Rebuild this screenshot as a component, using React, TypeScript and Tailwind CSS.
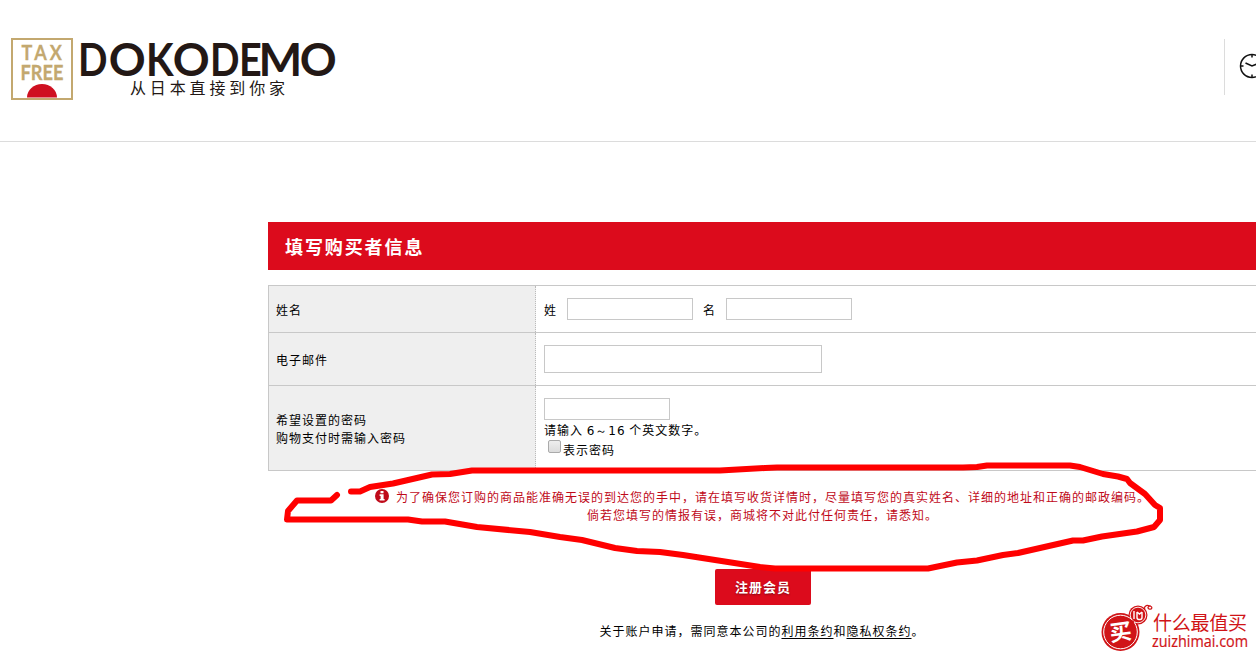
import React from 'react';

const WORDMARK = [
  { char: 'D', x: 81, width: 26 },
  { char: 'O', x: 110, width: 35 },
  { char: 'K', x: 149, width: 25 },
  { char: 'O', x: 174, width: 35 },
  { char: 'D', x: 213, width: 26 },
  { char: 'E', x: 242, width: 18 },
  { char: 'M', x: 262, width: 37 },
  { char: 'O', x: 301, width: 35 }
];

// Ink box of each Lato Bold capital, in em
const INK: Record<string, { left: number; width: number }> = {
  D: { left: 0.075, width: 0.67 },
  O: { left: 0.03, width: 0.765 },
  K: { left: 0.075, width: 0.62 },
  E: { left: 0.075, width: 0.455 },
  M: { left: 0.075, width: 0.8 }
};

const Logo = () =>
<svg width="340" height="84" viewBox="0 20 340 84" role="img" className="tracking-normal">
    <rect x="12" y="39" width="60" height="60" fill="#fff" stroke="#c3a86f" strokeWidth="2" />
    <path d="M27 97.500A15 13.500 0 0 1 57 97.500Z" fill="#cf1020" />
    <g fontFamily="Lato, sans-serif" fontWeight="700" fontSize="20.500" fill="#c3a86f" stroke="#c3a86f" strokeWidth="0.300">
      <text transform="translate(21.500 60) scale(0.880 1)" textLength="46" lengthAdjust="spacing">TAX</text>
      <text x="20.500" y="80" textLength="43" lengthAdjust="spacingAndGlyphs">FREE</text>
    </g>
    <g fontFamily="Lato, sans-serif" fontWeight="700" fontSize="46" fill="#231815">
      {WORDMARK.map((letter) => {
      const ink = INK[letter.char];
      const scale = letter.width / (ink.width * 46);
      return (
        <text
          key={letter.x}
          transform={`translate(${letter.x - ink.left * 46 * scale} 75.500) scale(${scale} 1)`}>
            {letter.char}
          </text>);

    })}
    </g>
    <text
    x="130"
    y="93.500"
    textLength="155"
    fontFamily="'Noto Sans CJK SC', sans-serif"
    fontSize="16"
    fill="#231815">
      从日本直接到你家
    </text>
  </svg>;


const ClockIcon = () =>
<svg width="26" height="26" viewBox="0 0 26 26" fill="none" stroke="#111" strokeWidth="1.500">
    <circle cx="13" cy="13" r="11.500" />
    <path d="M6.500 10L13 13L18 11M13 2v2.500M13 21.500V24M2 13h2.500M21.500 13H24" />
  </svg>;


const InfoIcon = () =>
<svg width="14" height="14" viewBox="0 0 14 14" className="mr-[7px] inline-block align-[-1px]">
    <circle cx="7" cy="7" r="7" fill="#bf0a1a" />
    <path d="M5.500 2h3v2.200h-3zM4.600 5.300h4v4.600h1v1.600H4.600V9.900h1V6.900h-1z" fill="#fff" />
  </svg>;


const MarkerStroke = () =>
<svg
  width="1256"
  height="656"
  viewBox="0 0 1256 656"
  fill="none"
  stroke="#ff0000"
  strokeWidth="6"
  strokeLinecap="round"
  strokeLinejoin="round"
  className="pointer-events-none absolute top-0 left-0">

    <path d="M337 495L331 500.500H297L288 511L287 519.500H408L422 521.500H445L477 527L530 532L560 537L582 540L615 548L637 551L660 552L683 555L760 567L775 568.500H928L957 562.500L977 560.500L1003 555L1018 553L1073 540.500H1083L1102 536.500L1137 531.500L1154 527L1160 520V508L1155 505L1145 494L1130 483L1127 479L1118 476.500L1103 474L1080 467L1070 465.500H987L977 467L963 467.500H777L765 468L720 470.500H472L450 474L432 474.500L393 483.500L370 487L360 491.500H351" />
  </svg>;


const Watermark = () =>
<svg
  width="158"
  height="56"
  viewBox="1098 600 158 56"
  className="pointer-events-none absolute top-[600px] left-[1098px] tracking-normal"
  fill="#d01417">

    <circle cx="1120.500" cy="632" r="19" />
    <circle cx="1138" cy="615" r="9.500" />
    <circle cx="1120.500" cy="632" r="16.800" fill="none" stroke="#fff" strokeWidth="1" />
    <circle cx="1138" cy="615" r="7.800" fill="none" stroke="#fff" strokeWidth="0.900" />
    <path d="M1127 618l7 3l-1 5l-5-2z" />
    <path d="M1144 609c1-4 3-4 6-3c3 1 2 4-1 3c-2-1-1-3 2-3" fill="none" stroke="#d01417" strokeWidth="1.200" />
    <path d="M1134 611v8M1137 612v5.500q0 2 2 2h1q2 0 2-2v-5.500M1137 612l2.500 2l2.500-2" fill="none" stroke="#fff" strokeWidth="1.400" />
    <text x="1109.500" y="640" fontSize="22" fontWeight="700" fill="#fff" fontFamily="'Noto Sans CJK SC', sans-serif" transform="rotate(-8 1120 632)">
      买
    </text>
    <text x="1153" y="630" fontSize="19" textLength="94" fontFamily="'Noto Sans CJK SC', sans-serif">
      什么最值买
    </text>
    <text x="1152" y="647" fontSize="15.500" textLength="96" lengthAdjust="spacingAndGlyphs" stroke="#d01417" strokeWidth="0.200" fontFamily="'Open Sans', 'Noto Sans', sans-serif">
      zuizhimai.com
    </text>
  </svg>;


const labelCell =
'flex w-[267px] shrink-0 items-center border-r border-dotted border-[#bbb] bg-[#efefef] pl-[7px]';
const field = 'border border-[#c8c8c8] bg-white outline-none';

export default function App() {
  return (
    <div className="relative h-[656px] w-full overflow-hidden bg-white font-['Noto_Sans_CJK_SC',sans-serif] text-[12px] leading-[18px] tracking-[1px] text-black">
      <header className="flex h-[142px] w-[1300px] items-start justify-between border-b border-[#dcdcdc] pt-5">
        <Logo />
        <div className="mt-[19px] flex h-14 w-[76px] items-center border-l border-[#dcdcdc] pb-[2px] pl-[14px]">
          <ClockIcon />
        </div>
      </header>

      <main className="ml-[268px] w-[990px] pt-20">
        <h1 className="flex h-12 items-center bg-[#dc0b1c] pb-px pl-[17px] text-[18px] font-bold tracking-[1.9px] text-white">
          填写购买者信息
        </h1>

        <form>
          <div className="mt-[15px] border border-[#c8c8c8]">
            <div className="flex h-[47px] border-b border-[#c8c8c8]">
              <div className={labelCell}>
                <span className="pt-px">姓名</span>
              </div>
              <div className="flex items-center pl-2">
                <span className="w-[23px] pt-px">姓</span>
                <input className={`${field} h-[22px] w-[126px]`} />
                <span className="ml-[10px] w-[23px] pt-px">名</span>
                <input className={`${field} h-[22px] w-[126px]`} />
              </div>
            </div>

            <div className="flex h-[53px] border-b border-[#c8c8c8]">
              <div className={labelCell}>
                <span className="pt-[2px]">电子邮件</span>
              </div>
              <div className="flex items-center pl-2">
                <input className={`${field} h-7 w-[278px]`} />
              </div>
            </div>

            <div className="flex h-[84px]">
              <div className={labelCell}>
                <p className="pt-[2px]">
                  希望设置的密码
                  <br />
                  购物支付时需输入密码
                </p>
              </div>
              <div className="flex flex-col pt-3 pl-2">
                <input className={`${field} h-[22px] w-[126px]`} />
                <p className="mt-px whitespace-pre">
                  请输入 <span className="font-['DejaVu_Sans']">6～16</span> 个英文数字。
                </p>
                <label className="flex items-start pl-1">
                  <input
                    type="checkbox"
                    className="mr-[2px] h-[13px] w-[13px] appearance-none rounded-[2px] border border-[#aaa] bg-linear-to-b from-[#eee] to-[#dcdcdc]" />

                  <span className="pt-px">表示密码</span>
                </label>
              </div>
            </div>
          </div>

          <p className="mt-[17px] pr-px text-center text-[#bf0a1a]">
            <InfoIcon />
            为了确保您订购的商品能准确无误的到达您的手中，请在填写收货详情时，尽量填写您的真实姓名、详细的地址和正确的邮政编码。
            <br />
            倘若您填写的情报有误，商城将不对此付任何责任，请悉知。
          </p>

          <div className="mt-[45px] flex justify-center">
            <button
              type="button"
              className="h-9 w-24 rounded-[2px] bg-[#dc0b1c] text-[13px] font-bold tracking-[1px] text-white [text-shadow:0_1px_2px_rgba(0,0,0,0.4)]">

              注册会员
            </button>
          </div>

          <p className="mt-[17px] pr-[2px] text-center">
            关于账户申请，需同意本公司的<a className="underline underline-offset-2">利用条约</a>和<a className="underline underline-offset-2">隐私权条约</a>。
          </p>
        </form>
      </main>

      <MarkerStroke />
      <Watermark />
    </div>);

}
